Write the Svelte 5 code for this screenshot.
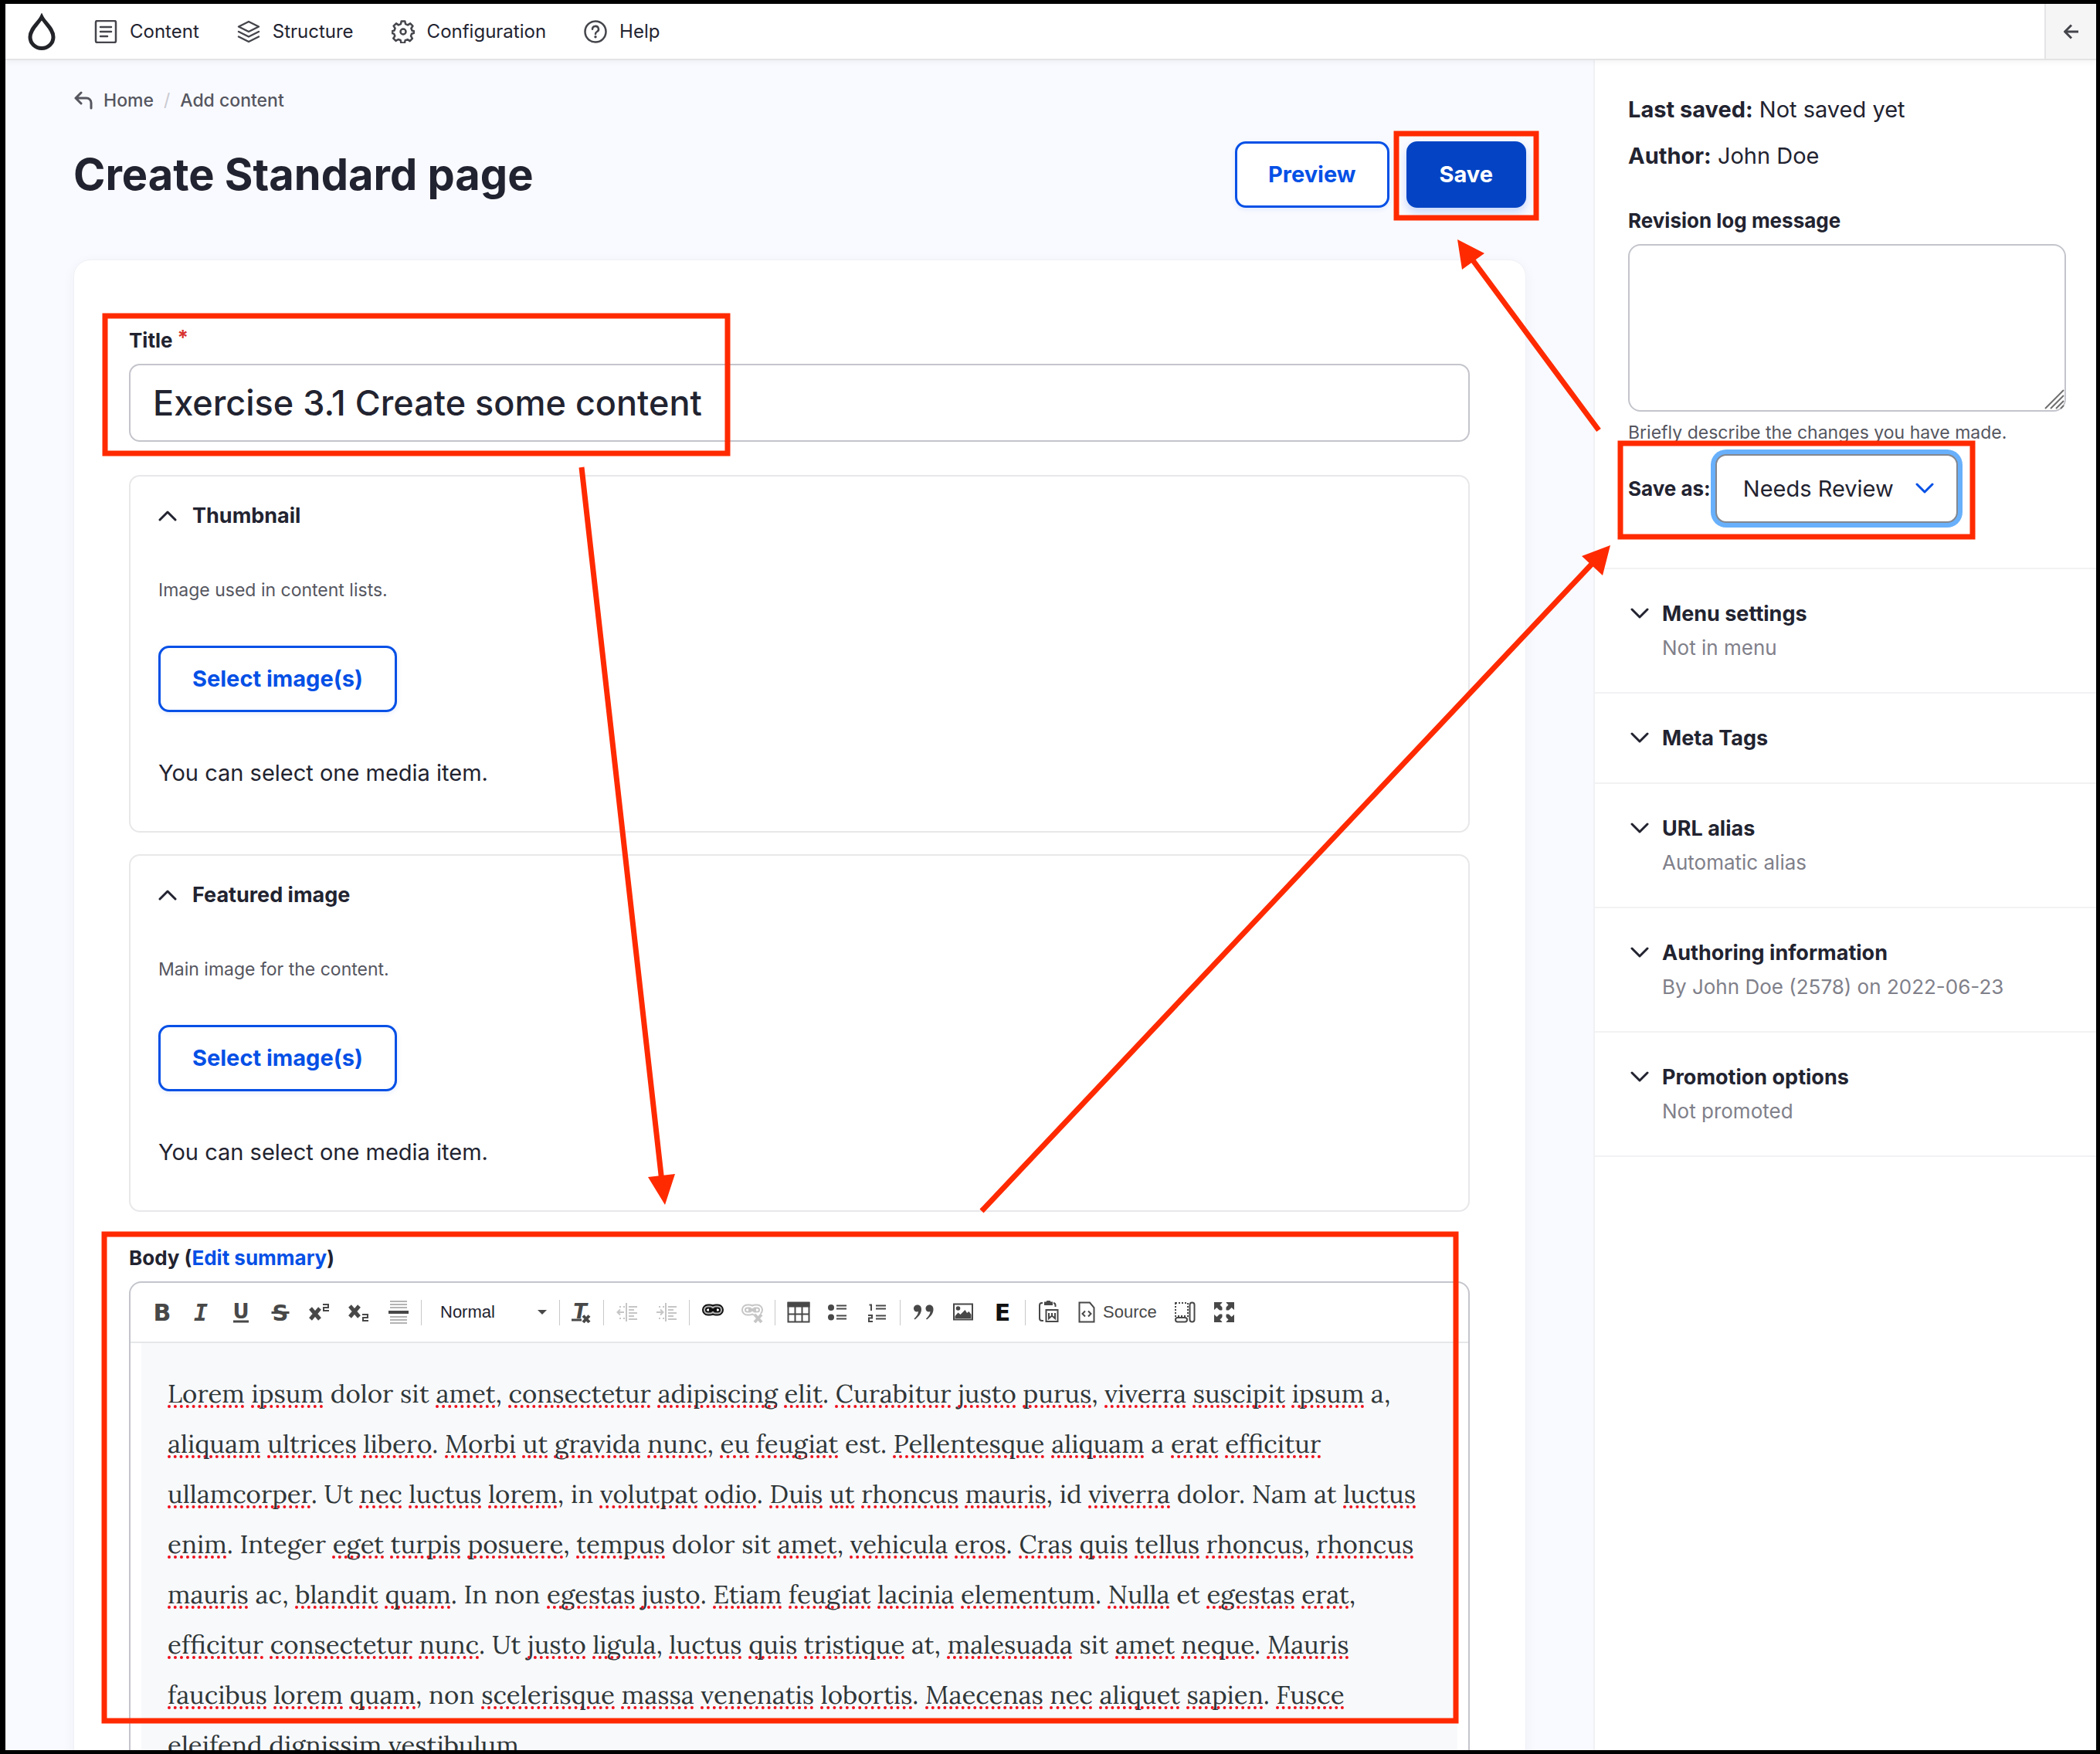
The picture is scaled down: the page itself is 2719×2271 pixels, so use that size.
<script>
  const navItems = [
    { icon: 'content', label: 'Content' },
    { icon: 'structure', label: 'Structure' },
    { icon: 'config', label: 'Configuration' },
    { icon: 'help', label: 'Help' }
  ];

  const mediaFields = [
    { title: 'Thumbnail', description: 'Image used in content lists.' },
    { title: 'Featured image', description: 'Main image for the content.' }
  ];

  const sections = [
    { title: 'Menu settings', summary: 'Not in menu' },
    { title: 'Meta Tags', summary: '' },
    { title: 'URL alias', summary: 'Automatic alias' },
    { title: 'Authoring information', summary: 'By John Doe (2578) on 2022-06-23' },
    { title: 'Promotion options', summary: 'Not promoted' }
  ];

  const textTools = [
    ['bold', 'Bold'],
    ['italic', 'Italic'],
    ['underline', 'Underline'],
    ['strike', 'Strikethrough'],
    ['sup', 'Superscript'],
    ['sub', 'Subscript'],
    ['rule', 'Horizontal line']
  ];

  const toolGroups = [
    [['outdent', 'Decrease indent'], ['indent', 'Increase indent']],
    [['link', 'Link'], ['unlink', 'Unlink']],
    [['table', 'Table'], ['bullets', 'Bulleted list'], ['numbers', 'Numbered list']],
    [['quote', 'Block quote'], ['image', 'Image'], ['embed', 'Embed']]
  ];

  const bodyLines = [
    'Lorem ipsum dolor sit amet, consectetur adipiscing elit. Curabitur justo purus, viverra suscipit ipsum a,',
    'aliquam ultrices libero. Morbi ut gravida nunc, eu feugiat est. Pellentesque aliquam a erat efficitur',
    'ullamcorper. Ut nec luctus lorem, in volutpat odio. Duis ut rhoncus mauris, id viverra dolor. Nam at luctus',
    'enim. Integer eget turpis posuere, tempus dolor sit amet, vehicula eros. Cras quis tellus rhoncus, rhoncus',
    'mauris ac, blandit quam. In non egestas justo. Etiam feugiat lacinia elementum. Nulla et egestas erat,',
    'efficitur consectetur nunc. Ut justo ligula, luctus quis tristique at, malesuada sit amet neque. Mauris',
    'faucibus lorem quam, non scelerisque massa venenatis lobortis. Maecenas nec aliquet sapien. Fusce',
    'eleifend dignissim vestibulum'
  ];

  // Words the spell checker accepts; all others get the dotted mark.
  const known = new Set(['dolor', 'sit', 'a', 'est', 'Ut', 'in', 'id', 'Nam', 'at', 'Integer', 'ac', 'In', 'non', 'et']);

  const tokens = (line) =>
    line.split(' ').map((part) => {
      const word = part.replace(/[.,]$/, '');
      return { word, tail: part.slice(word.length) + ' ', ok: known.has(word) };
    });

  let title = $state('Exercise 3.1 Create some content');
  let message = $state('');
  let moderation = $state('Needs Review');
  let format = $state('Normal');
</script>

{#snippet navIcon(name)}
  <svg class="nav-icon" viewBox="0 0 30 30" aria-hidden="true">
    {#if name === 'content'}
      <rect x="2" y="1" width="26" height="28" rx="2" />
      <path d="M8 9h14M8 15h14M8 21h9" />
    {:else if name === 'structure'}
      <path d="M15 2 28 8.5 15 15 2 8.500z" />
      <path d="M2 15l13 6.500L28 15M2 21.500 15 28l13-6.500" />
    {:else if name === 'config'}
      <path d="M12.700 1.500h4.600l.8 3.700 2.900 1.200 3.200-2 3.200 3.300-2 3.100 1.200 2.900 2.400.6v2.400l-3 1-1 2.900 1.900 3.200-3.200 3.300-3-2-3 1.100-.8 3.300h-4.600l-.7-3.500-3-1-3.100 1.900-3.200-3.200 2-3.100-1.300-3-2.500-.6v-2.500l3-1 1.100-2.800-2-3.100L6 4.400l3 2 2.900-1.200z" />
      <circle cx="15" cy="15" r="3.500" />
    {:else}
      <circle cx="15" cy="15" r="13.500" />
      <path d="M11 11.800a4 3.800 0 1 1 6 3.200c-1.400.8-2 1.500-2 3" />
      <circle class="dot" cx="15" cy="21.800" r="1.700" />
    {/if}
  </svg>
{/snippet}

{#snippet chevron(kind)}
  <svg class="chevron {kind}" viewBox="0 0 24 14" aria-hidden="true"><path d="M2 2l10 10L22 2" /></svg>
{/snippet}

{#snippet toolIcon(name)}
  <svg class="tool-icon" viewBox="0 0 34 34" aria-hidden="true">
    {#if name === 'bold'}
      <text class="glyph sans" x="17" y="28" font-size="30">B</text>
    {:else if name === 'italic'}
      <text class="glyph slanted" x="16" y="28" font-size="30">I</text>
    {:else if name === 'underline'}
      <text class="glyph sans" x="17" y="25" font-size="26">U</text>
      <path class="line" d="M7 29h20" />
    {:else if name === 'strike'}
      <text class="glyph sans" x="17" y="28" font-size="29">S</text>
      <path class="line" d="M5.500 17.500h23" />
    {:else if name === 'sup'}
      <path class="heavy" d="M5 12l12 14M17 12 5 26" />
      <path class="line thin" d="M21 7h7v4h-6v4h7" />
    {:else if name === 'sub'}
      <path class="heavy" d="M5 9l12 14M17 9 5 23" />
      <path class="line thin" d="M21 20h7v4h-6v4h7" />
    {:else if name === 'rule'}
      <path class="faint" d="M6 3h22M6 7h22M6 11h22M6 23h22M6 27h22M6 31h22" />
      <path class="line bold" d="M4 17h26" />
    {:else if name === 'clear'}
      <text class="glyph slanted-sans" x="15" y="24.500" font-size="26">T</text>
      <path class="line" d="M4 27h13" />
      <path class="line bold" d="M19 21.500l8 8.500M27 21.500l-8 8.500" />
    {:else if name === 'outdent' || name === 'indent'}
      <path class="line thin" d="M16 5v24M19 10h11M19 14h7M19 18h11M19 22h7M19 26h11" />
      <path class="line thin" stroke-dasharray="2 3" d="M7 10h8M7 25h8" />
      {#if name === 'outdent'}
        <path class="line thin" d="M4 17h9M8 13.500 4.500 17 8 20.500" />
      {:else}
        <path class="line thin" d="M4 17h9M9 13.500l3.500 3.500L9 20.500" />
      {/if}
    {:else if name === 'link' || name === 'unlink'}
      <g transform="translate(0 -2)">
        <rect class="ring" x="6" y="11.500" width="12" height="9" rx="4.500" />
        <rect class="ring" x="16" y="11.500" width="12" height="9" rx="4.500" />
        <rect class="core" x="6" y="11.500" width="12" height="9" rx="4.500" />
        <rect class="core" x="16" y="11.500" width="12" height="9" rx="4.500" />
        <path class="line bold" d="M12 16h10" />
      </g>
      {#if name === 'unlink'}
        <path class="under" d="M20 20l9 10M29 20l-9 10" />
        <path class="line bold" d="M20 20l9 10M29 20l-9 10" />
      {/if}
    {:else if name === 'table'}
      <rect class="fill" x="2.500" y="3.500" width="29" height="7" />
      <path class="line thin" d="M3.500 4v25.500h27V4M12.500 10v20M21.500 10v20M3 19.500h28" />
    {:else if name === 'bullets'}
      <circle class="fill" cx="8" cy="11" r="4" />
      <circle class="fill" cx="8" cy="23.500" r="4" />
      <path class="line thin" d="M15 8.500h13M15 12.500h13M15 21.500h13M15 25.500h13" />
    {:else if name === 'numbers'}
      <path class="line thin" d="M6.500 7.500H9V15M5 21h5v3.500H6V29h5" />
      <path class="line thin" d="M15 8.500h13M15 12.500h13M15 21.500h13M15 25.500h13" />
    {:else if name === 'quote'}
      <path class="fill" d="M9 7.500c-3.300 0-5 2.300-5 4.700 0 2.700 2 4.300 4.300 4.300.8 0 1.300-.2 1.700-.4-.3 3.200-2 6.400-5.500 9.400l1 .9c5.500-3.800 8.500-8.400 8.500-13.100C14 9.700 12 7.500 9 7.500z" />
      <path class="fill" d="M24.500 7.500c-3.300 0-5 2.300-5 4.700 0 2.700 2 4.300 4.300 4.300.8 0 1.300-.2 1.700-.4-.3 3.200-2 6.400-5.500 9.400l1 .9c5.500-3.800 8.500-8.400 8.500-13.100 0-3.600-2-5.800-5-5.800z" />
    {:else if name === 'image'}
      <rect class="line thin" x="5" y="6.500" width="24" height="20" />
      <circle class="fill" cx="10.500" cy="12" r="2.800" />
      <path class="fill" d="M6.500 25v-3l4-4.500 3 2.500 6-6 2.500 4 2.500-2 3 4V25z" />
    {:else if name === 'embed'}
      <text class="glyph sans" x="17" y="28" font-size="30">E</text>
    {:else if name === 'paste'}
      <path class="line thin" d="M9 5H8a3 3 0 0 0-3 3v17a3 3 0 0 0 3 3h2M23 5a3 3 0 0 1 2.500 3v2" />
      <path class="fill" d="M11 3.500h2.500l1-1.500h4l1 1.500H22V8H11z" />
      <rect class="line thin" x="13.500" y="14" width="15" height="15" />
      <path class="line thin" d="M17 18v7l4-3.500 4 3.500v-7M21 18v4" />
    {:else if name === 'blocks'}
      <path class="line thin" stroke-dasharray="2 2" d="M5 5h16v17H5z" />
      <rect class="line thin" x="5" y="24" width="15" height="5.500" rx="2.700" />
      <rect class="line thin" x="23.500" y="4.500" width="6" height="25" rx="3" />
    {:else if name === 'maximize'}
      <path class="fill" d="M4 4h11l-3.500 3.500 5 5-4 3.500-5-5L4 14zM30 4v10l-3.500-3-5 5-4-3.500 5-5L19 4zM4 30V20l3.500 3 5-5 4 3.500-5 5L15 30zM30 30H19l3.500-3.500-5-5 4-3.500 5 5 3.500-3z" />
      <path class="gap" d="M17 2v30M2 17h30" />
    {/if}
  </svg>
{/snippet}

<div class="frame">
  <header class="topbar">
    <a class="logo" href="#home" aria-label="Home">
      <svg viewBox="0 0 36 48" aria-hidden="true"><path d="M18 5C14 13 3 20 3 31a15 14.500 0 0 0 30 0C33 20 22 13 18 5z" /></svg>
    </a>
    <nav>
      {#each navItems as item}
        <a href="#{item.icon}">{@render navIcon(item.icon)}<span>{item.label}</span></a>
      {/each}
    </nav>
    <button class="collapse" type="button" aria-label="Vertical orientation">
      <svg viewBox="0 0 20 20" aria-hidden="true"><path d="M19 10H2M10 1.500 1.500 10l8.500 8.500" /></svg>
    </button>
  </header>

  <div class="columns">
    <main>
      <nav class="breadcrumb" aria-label="Breadcrumb">
        <svg viewBox="0 0 24 24" aria-hidden="true"><path d="M9 2 2 9l7 7M2 9h14a6 6 0 0 1 6 6v7" /></svg>
        <a href="#home">Home</a>
        <span class="slash">/</span>
        <a href="#add">Add content</a>
      </nav>

      <div class="heading">
        <h1>Create Standard page</h1>
        <div class="actions">
          <button class="btn" type="button">Preview</button>
          <button class="btn primary" type="button">Save</button>
        </div>
      </div>

      <div class="card">
        <label class="field-label" for="title">Title<span class="required">*</span></label>
        <input id="title" class="title-input" type="text" bind:value={title} />

        <div class="media">
          {#each mediaFields as field}
            <section class="panel">
              <h2>{@render chevron('up')}{field.title}</h2>
              <p class="hint">{field.description}</p>
              <button class="btn" type="button">Select image(s)</button>
              <p class="note">You can select one media item.</p>
            </section>
          {/each}
        </div>

        <div class="field-label">Body (<a href="#summary">Edit summary</a>)</div>
        <div class="editor">
          <div class="toolbar" role="toolbar" aria-label="Editor toolbar">
            {#each textTools as [name, label]}
              <button type="button" class="tool" aria-label={label}>{@render toolIcon(name)}</button>
            {/each}
            <span class="sep"></span>
            <div class="combo">
              <select aria-label="Paragraph format" bind:value={format}>
                <option>Normal</option>
                <option>Heading 2</option>
              </select>
              <svg viewBox="0 0 12 6" aria-hidden="true"><path d="M0 0h12L6 6z" /></svg>
            </div>
            <span class="sep"></span>
            <button type="button" class="tool narrow" aria-label="Remove format">{@render toolIcon('clear')}</button>
            {#each toolGroups as group}
              <span class="sep"></span>
              {#each group as [name, label]}
                <button type="button" class="tool {name}" aria-label={label}>{@render toolIcon(name)}</button>
              {/each}
            {/each}
            <span class="sep"></span>
            <button type="button" class="tool" aria-label="Paste from Word">{@render toolIcon('paste')}</button>
            <button type="button" class="source">
              <svg viewBox="0 0 22 28" aria-hidden="true">
                <path d="M1.500 1.500H15L20.500 8v18.500h-19z" />
                <path d="M9 12.500 5.500 16 9 19.500M13 12.500l3.500 3.500-3.500 3.500" />
              </svg>
              Source
            </button>
            <button type="button" class="tool" aria-label="Show blocks">{@render toolIcon('blocks')}</button>
            <button type="button" class="tool" aria-label="Maximize">{@render toolIcon('maximize')}</button>
          </div>
          <div class="body-text" contenteditable="true" spellcheck="false" role="textbox" tabindex="0" aria-label="Body">
            {#each bodyLines as line}
              <div>{#each tokens(line) as t}<span class:misspelled={!t.ok}>{t.word}</span>{t.tail}{/each}</div>
            {/each}
          </div>
        </div>
      </div>
    </main>

    <aside>
      <div class="meta">
        <p><strong>Last saved:</strong> Not saved yet</p>
        <p><strong>Author:</strong> John Doe</p>
        <label class="field-label" for="log">Revision log message</label>
        <div class="log">
          <textarea id="log" bind:value={message}></textarea>
          <svg viewBox="0 0 26 26" aria-hidden="true"><path d="M1 25 25 1M8 25 25 8M15 25l10-10M21 25l4-4" /></svg>
        </div>
        <p class="hint">Briefly describe the changes you have made.</p>
        <div class="save-as">
          <label class="field-label" for="state">Save as:</label>
          <div class="select">
            <select id="state" bind:value={moderation}>
              <option>Needs Review</option>
              <option>Draft</option>
              <option>Published</option>
            </select>
            {@render chevron('blue')}
          </div>
        </div>
      </div>
      {#each sections as s}
        <section class="group">
          {@render chevron('down')}
          <div>
            <h3>{s.title}</h3>
            {#if s.summary}<p>{s.summary}</p>{/if}
          </div>
        </section>
      {/each}
    </aside>
  </div>

  <svg class="annotations" viewBox="0 0 2719 2271" preserveAspectRatio="xMinYMin meet" aria-hidden="true">
    <rect x="136" y="409" width="806" height="178" />
    <rect x="1808" y="173" width="181" height="109" />
    <rect x="2098" y="574" width="456" height="121" />
    <rect x="135" y="1598" width="1750" height="630" />
    <path d="M753 605 857 1530M1271 1568 2065 726M2070 557 1904 333" />
    <path class="head" d="M861 1560 839 1524 874 1520zM2085 706 2048 720 2075 745zM1887 310 1893 349 1922 328z" />
  </svg>
</div>

<style>
  :global(body) {
    background: #000;
  }

  * {
    box-sizing: border-box;
  }

  .frame {
    position: relative;
    display: flex;
    flex-direction: column;
    height: 100vh;
    overflow: hidden;
    padding: 5px 5px 5px 7px;
    background: #000;
    color: #222330;
    font-family: Inter, 'Liberation Sans', sans-serif;
    font-size: 29px;
    line-height: 40px;
  }

  h1, h2, h3, p {
    margin: 0;
  }

  a {
    color: inherit;
    text-decoration: none;
  }

  button, input, select, textarea {
    margin: 0;
    font: inherit;
    color: inherit;
  }

  svg {
    display: block;
    flex: none;
    fill: none;
    stroke: currentColor;
  }

  /* Top bar */
  .topbar {
    position: relative;
    z-index: 1;
    display: flex;
    align-items: stretch;
    flex: none;
    height: 73px;
    background: #fff;
    border-bottom: 2px solid #e4e4e6;
    box-shadow: 0 2px 8px rgba(0, 0, 0, 0.05);
    font-size: 24px;
    font-weight: 400;
  }

  .logo {
    display: flex;
    align-items: center;
    padding: 0 50px 0 29px;
    color: #232429;
  }

  .logo svg {
    width: 36px;
    height: 48px;
    stroke-width: 5;
    stroke-linejoin: miter;
  }

  .topbar nav {
    display: flex;
    flex: 1;
    gap: 49px;
  }

  .topbar nav a {
    display: flex;
    align-items: center;
    gap: 16px;
  }

  .nav-icon {
    width: 30px;
    height: 30px;
    color: #45464c;
    stroke-width: 2.500;
    stroke-linejoin: round;
    stroke-linecap: round;
  }

  .nav-icon .dot {
    fill: currentColor;
    stroke: none;
  }

  .collapse {
    display: flex;
    align-items: center;
    justify-content: center;
    width: 67px;
    padding: 0;
    border: 0;
    border-left: 2px solid #e4e4e6;
    background: #f5f5f6;
    color: #45464c;
  }

  .collapse svg {
    width: 20px;
    height: 20px;
    stroke-width: 3;
  }

  .columns {
    display: flex;
    flex: 1;
    min-height: 0;
    overflow: hidden;
    background: #f9faff;
  }

  /* Main column */
  main {
    flex: 1;
    min-width: 0;
    padding: 36px 87px 0 88px;
  }

  .breadcrumb {
    display: flex;
    align-items: center;
    gap: 13px;
    height: 32px;
    font-size: 23px;
    line-height: 32px;
    font-weight: 500;
    color: #55565f;
  }

  .breadcrumb svg {
    width: 26px;
    height: 24px;
    stroke-width: 3;
    stroke-linecap: round;
    stroke-linejoin: round;
  }

  .breadcrumb .slash {
    color: #c9c9d0;
    font-weight: 400;
  }

  .heading {
    display: flex;
    align-items: center;
    justify-content: space-between;
    margin: 37px 0 67px;
  }

  h1 {
    font-size: 56px;
    line-height: 76px;
    font-weight: 700;
  }

  .actions {
    display: flex;
    gap: 22px;
  }

  .btn {
    height: 86px;
    padding: 0 40px;
    border: 3px solid #0550e6;
    border-radius: 14px;
    background: #fff;
    color: #0550e6;
    font-size: 29px;
    line-height: 40px;
    font-weight: 700;
    box-shadow: 0 2px 6px rgba(5, 80, 230, 0.1);
  }

  .btn.primary {
    background: #0444c4;
    border-color: #0444c4;
    color: #fff;
    box-shadow: 0 6px 12px rgba(5, 80, 230, 0.2);
  }

  .card {
    padding: 88px 72px 72px 71px;
    background: #fff;
    border: 1px solid #f0f1f5;
    border-radius: 22px;
    box-shadow: 0 4px 16px rgba(40, 50, 90, 0.05);
  }

  .field-label {
    display: block;
    font-size: 26px;
    line-height: 32px;
    font-weight: 700;
  }

  .field-label a {
    color: #0550e6;
  }

  .required {
    margin-left: 6px;
    color: #d8322f;
    line-height: 24px;
    vertical-align: top;
  }

  .title-input {
    display: block;
    width: 100%;
    height: 101px;
    margin-top: 14px;
    padding: 0 29px;
    border: 2px solid #c4c5cc;
    border-radius: 14px;
    background: #fff;
    font-size: 45px;
    font-weight: 500;
  }

  .media {
    display: flex;
    flex-direction: column;
    gap: 28px;
    margin: 43px 0 44px;
  }

  .panel {
    display: flex;
    flex-direction: column;
    align-items: flex-start;
    padding: 35px 36px 55px;
    border: 2px solid #e8e8ea;
    border-radius: 14px;
  }

  .panel h2 {
    display: flex;
    align-items: center;
    gap: 20px;
    font-size: 27px;
    line-height: 32px;
    font-weight: 700;
  }

  .panel .btn {
    padding: 0 41px;
  }

  .hint {
    color: #55565f;
    font-size: 23px;
    line-height: 32px;
  }

  .panel .hint {
    margin: 64px 0 56px;
  }

  .panel .note {
    margin-top: 59px;
  }

  .chevron {
    width: 24px;
    height: 14px;
    stroke-width: 3;
    stroke-linecap: round;
    stroke-linejoin: round;
  }

  .chevron.up {
    transform: scaleY(-1);
  }

  /* Editor */
  .editor {
    margin-top: 14px;
    border: 2px solid #c4c5cc;
    border-radius: 16px;
  }

  .toolbar {
    display: flex;
    align-items: center;
    height: 78px;
    padding-left: 15px;
    border-bottom: 2px solid #e6e7e9;
    color: #484848;
    font-family: 'Liberation Sans', Arial, sans-serif;
    font-size: 22px;
  }

  .tool {
    display: flex;
    align-items: center;
    justify-content: center;
    width: 51px;
    height: 50px;
    padding: 0;
    border: 0;
    background: none;
  }

  .tool.narrow {
    width: 48px;
  }

  .tool.outdent, .tool.indent, .tool.unlink {
    color: #c6c6c6;
  }

  .tool.link, .tool.embed {
    color: #111;
  }

  .tool-icon {
    width: 34px;
    height: 34px;
  }

  .tool-icon .glyph {
    fill: currentColor;
    stroke: none;
    font-weight: 700;
    text-anchor: middle;
  }

  .tool-icon .sans {
    font-family: 'DejaVu Sans', sans-serif;
  }

  .tool-icon .slanted {
    font-family: 'DejaVu Sans Mono', monospace;
    font-style: italic;
  }

  .tool-icon .slanted-sans {
    font-family: 'DejaVu Sans', sans-serif;
    font-style: italic;
  }

  .tool-icon .line {
    stroke-width: 3;
  }

  .tool-icon .line.thin {
    stroke-width: 2;
  }

  .tool-icon .line.bold {
    stroke-width: 4;
  }

  .tool-icon .heavy {
    stroke-width: 5;
  }

  .tool-icon .faint {
    stroke: #b4b4b4;
    stroke-width: 2;
  }

  .tool-icon .fill {
    fill: currentColor;
    stroke: none;
  }

  .tool-icon .ring {
    stroke-width: 6;
  }

  .tool-icon .core {
    stroke: #b5b5b5;
    stroke-width: 2;
  }

  .tool.unlink .core {
    stroke: #fff;
  }

  .tool-icon .under {
    stroke: #fff;
    stroke-width: 8;
  }

  .tool-icon .gap {
    stroke: #fff;
    stroke-width: 5;
  }

  .sep {
    flex: none;
    width: 1px;
    height: 33px;
    margin: 0 4px;
    background: #c8c8c8;
  }

  .combo {
    position: relative;
    width: 170px;
    color: #222330;
  }

  .combo select {
    width: 100%;
    height: 50px;
    padding: 0 20px;
    border: 0;
    background: none;
    appearance: none;
  }

  .combo svg {
    position: absolute;
    right: 12px;
    top: 22px;
    width: 12px;
    height: 6px;
    fill: #484848;
    stroke: none;
    pointer-events: none;
  }

  .source {
    display: flex;
    align-items: center;
    gap: 10px;
    height: 50px;
    padding: 0 11px 0 13px;
    border: 0;
    background: none;
  }

  .source svg {
    width: 22px;
    height: 28px;
    stroke-width: 2;
  }

  .body-text {
    margin: 0 14px;
    padding: 33px 34px;
    background: #f8f9fb;
    color: #2f3638;
    font-family: Lora, 'Liberation Serif', serif;
    font-size: 33px;
    line-height: 65px;
    white-space: nowrap;
  }

  .misspelled {
    text-decoration: underline dotted #f0101c;
    text-decoration-thickness: 4px;
    text-underline-offset: 3px;
    text-decoration-skip-ink: none;
  }

  /* Sidebar */
  aside {
    flex: none;
    width: 651px;
    background: #fff;
    border-left: 2px solid #f0f1f5;
  }

  .meta {
    padding: 44px 39px 58px 43px;
  }

  .meta p + p {
    margin-top: 20px;
  }

  .meta > .field-label {
    margin-top: 48px;
  }

  .log {
    position: relative;
    margin: 14px 0 11px;
  }

  textarea {
    display: block;
    width: 100%;
    height: 217px;
    padding: 20px;
    border: 2px solid #c4c5cc;
    border-radius: 16px;
    background: #fff;
    resize: none;
  }

  .log svg {
    position: absolute;
    right: 2px;
    bottom: 3px;
    width: 26px;
    height: 26px;
    color: #6f6f6f;
    stroke-width: 2;
  }

  .save-as {
    display: flex;
    align-items: center;
    gap: 6px;
    margin-top: 12px;
  }

  .select {
    position: relative;
    width: 314px;
  }

  .select select {
    width: 100%;
    height: 89px;
    padding: 0 34px;
    border: 2px solid #83878f;
    border-radius: 14px;
    background: #fff;
    box-shadow: 0 0 0 6px #68b0fb;
    appearance: none;
  }

  .select .chevron {
    position: absolute;
    right: 31px;
    top: 37px;
    color: #0550e6;
    pointer-events: none;
  }

  .group {
    display: flex;
    align-items: flex-start;
    gap: 17px;
    padding: 38px 39px 37px 46px;
    border-top: 2px solid #f2f2f4;
  }

  .group:last-child {
    border-bottom: 2px solid #f2f2f4;
  }

  .group .chevron {
    margin-top: 12px;
  }

  .group h3 {
    font-size: 27px;
    line-height: 40px;
    font-weight: 700;
  }

  .group p {
    margin-top: 4px;
    color: #80808a;
    font-size: 26px;
    line-height: 40px;
  }

  .annotations {
    position: absolute;
    z-index: 2;
    top: 0;
    left: 0;
    width: 100%;
    height: 100%;
    stroke: #ff2a00;
    stroke-width: 7;
    pointer-events: none;
  }

  .annotations .head {
    fill: #ff2a00;
    stroke: none;
  }
</style>
